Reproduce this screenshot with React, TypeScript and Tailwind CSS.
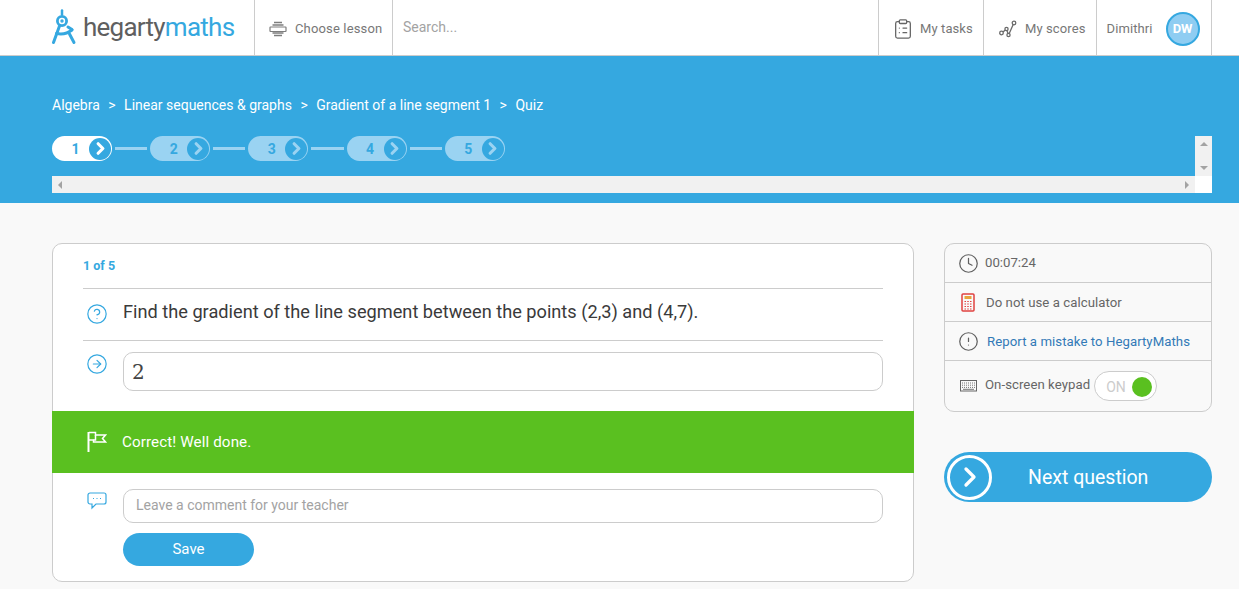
import { ChevronRight, CircleAlert, CircleArrowRight, CircleHelp, Clock, ClipboardList } from "lucide-react";

function CompassLogo() {
  return (
    <svg width="26" height="36" viewBox="0 0 26 36" fill="none" stroke="#35a8e0" strokeLinecap="round" strokeWidth="3">
      <path d="M10 1.5v4" strokeWidth="2.5" />
      <circle cx="10" cy="12" r="4.6" strokeWidth="2.8" />
      <circle cx="10" cy="12" r="1" strokeWidth="1.4" />
      <path d="M7.5 17 1.5 33.5" />
      <path d="M4.5 24.5c5 1 11 0 15.5-3.5" />
      <path d="M16 18l4 2.5M17.5 25l4.5 8.5" />
    </svg>
  );
}

function LessonIcon() {
  return (
    <svg width="18" height="18" viewBox="0 0 18 18" fill="none" stroke="#7d7d7d">
      <path d="M5 2.5h8M3.5 5h11M3.5 13h11M5 15.5h8" strokeWidth="1.6" />
      <rect x="1" y="7" width="16" height="4.5" rx="0.5" strokeWidth="1.2" />
    </svg>
  );
}

function ScoresIcon() {
  return (
    <svg width="18" height="18" viewBox="0 0 18 18" fill="none" stroke="#6a6a6a" strokeWidth="1.3">
      <circle cx="2.5" cy="13" r="1.8" />
      <circle cx="7.5" cy="9" r="1.6" />
      <circle cx="9.5" cy="15" r="1.6" />
      <circle cx="15" cy="3" r="1.8" />
      <path d="M4 12 6.3 10M8 10.6 9 13.5M10.2 13.5 14.2 4.6" />
    </svg>
  );
}

function FlagIcon() {
  return (
    <svg width="20" height="22" viewBox="0 0 20 22" fill="none" stroke="#fff" strokeWidth="1.5">
      <path d="M1.5 1v20" strokeWidth="2" />
      <path d="M2 1.5h6.5V4h10l-3 3.5 3 3.5H6.5V9H2" />
      <path d="M8.5 4v5H6.500" />
    </svg>
  );
}

function CommentIcon() {
  return (
    <svg width="20" height="18" viewBox="0 0 20 18" fill="none" stroke="#35a8e0" strokeWidth="1.2">
      <path d="M3 1h14a2 2 0 0 1 2 2v7a2 2 0 0 1-2 2H9l-4 4v-4H3a2 2 0 0 1-2-2V3a2 2 0 0 1 2-2Z" />
      <path d="M6 6.500h1M9.500 6.500h1M13 6.500h1" />
    </svg>
  );
}

function CalculatorIcon() {
  return (
    <svg width="14" height="19" viewBox="0 0 14 19" fill="none">
      <rect x="1" y="1" width="12" height="17" rx="1" stroke="#e0413f" strokeWidth="1.5" />
      <rect x="3.500" y="3" width="7" height="3" fill="#e8a33d" />
      <path d="M3.500 8.500h7M3.500 11h7M3.500 13.500h7M3.500 16h7" stroke="#e0413f" strokeWidth="1.2" strokeDasharray="1.500 1.250" />
    </svg>
  );
}

function KeyboardIcon() {
  return (
    <svg width="17" height="12" viewBox="0 0 17 12" fill="none">
      <rect x="0.500" y="0.500" width="16" height="10.500" stroke="#666" />
      <path d="M2 3h13M2 5.200h13M2 7.400h13" stroke="#777" strokeDasharray="1 1" />
      <path d="M3 9.300h11" stroke="#777" />
    </svg>
  );
}

function Step({ n, active }: { n: number; active?: boolean }) {
  return (
    <div className={`flex h-[25px] w-[60px] shrink-0 items-center rounded-full ${active ? "bg-white" : "bg-[#9ad3f2]"}`}>
      <span className="w-[37px] pl-[10px] text-center text-sm font-bold leading-none text-[#35a8e0]">{n}</span>
      <span className={`grid size-[22px] place-items-center rounded-full bg-[#35a8e0] ${active ? "text-white" : "text-[#9ad3f2]"}`}>
        <ChevronRight className="size-[19px]" strokeWidth={4} />
      </span>
    </div>
  );
}

function Connector() {
  return <div className="mx-[3px] h-[3px] w-[32.200px] shrink-0 bg-[#9ad3f2]" />;
}

export default function App() {
  return (
    <div className="h-[589px] overflow-hidden bg-[#f9f9f9] font-['Roboto',sans-serif]">
      <header className="h-[56px] border-b border-[#cccccc] bg-white pl-[52px] pr-[27px]">
        <div className="flex h-[55px] items-stretch text-[13px] text-[#777777]">
          <div className="flex w-[202px] shrink-0 items-center gap-[5px] pb-[2px]">
            <CompassLogo />
            <span className="text-[26px] leading-none tracking-[-0.75px] text-[#5f5f5f]">
              hegarty<span className="text-[#35a8e0]">maths</span>
            </span>
          </div>
          <div className="flex w-[138px] shrink-0 items-center gap-[8px] border-l border-[#cccccc] pl-[14px] pt-[2px]">
            <LessonIcon />
            <span className="tracking-[0.15px]">Choose lesson</span>
          </div>
          <div className="flex flex-1 items-center border-l border-[#cccccc] pb-[2px] pl-[10px] text-sm text-[#a3a3a3]">Search...</div>
          <div className="flex w-[105px] shrink-0 items-center gap-[6px] border-l border-[#cccccc] pl-[13px] pt-[2px]">
            <ClipboardList className="size-[22px] text-[#666666]" strokeWidth={1.4} />
            <span className="tracking-[0.1px]">My tasks</span>
          </div>
          <div className="flex w-[113px] shrink-0 items-center gap-[8px] border-l border-[#cccccc] pl-[15px] pt-[2px]">
            <ScoresIcon />
            <span className="tracking-[0.1px]">My scores</span>
          </div>
          <div className="flex w-[116px] shrink-0 items-center border-x border-[#cccccc] pl-[9.500px] pt-[2px]">
            <span className="tracking-[0.1px]">Dimithri</span>
            <span className="ml-[13px] grid size-[34px] place-items-center rounded-full border-2 border-[#35a8e0] bg-[#8fcdf2] text-[13px] font-bold text-white">DW</span>
          </div>
        </div>
      </header>

      <section className="h-[147px] bg-[#35a8e0] pl-[52px] pr-[27px] pt-[40px]">
        <div className="flex h-[18px] items-center gap-[8.500px] text-sm text-white">
          <span>Algebra</span>
          <span>&gt;</span>
          <span>Linear sequences &amp; graphs</span>
          <span>&gt;</span>
          <span>Gradient of a line segment 1</span>
          <span>&gt;</span>
          <span>Quiz</span>
        </div>
        <div className="mt-[22px] flex h-[57px]">
          <div className="flex min-w-0 flex-1 flex-col">
            <div className="mb-[15px] flex h-[25px] items-center">
              <Step n={1} active />
              <Connector />
              <Step n={2} />
              <Connector />
              <Step n={3} />
              <Connector />
              <Step n={4} />
              <Connector />
              <Step n={5} />
            </div>
            <div className="flex h-[17px] items-center justify-between bg-[#f1f1f1] px-[6px]">
              <span className="h-0 w-0 border-y-[4px] border-r-[4px] border-y-transparent border-r-[#a3a3a3]" />
              <span className="h-0 w-0 border-y-[4px] border-l-[4px] border-y-transparent border-l-[#a3a3a3]" />
            </div>
          </div>
          <div className="flex w-[17px] shrink-0 flex-col bg-white">
            <div className="flex h-[40px] flex-col items-center justify-between bg-[#f1f1f1] py-[6px]">
              <span className="h-0 w-0 border-x-[4px] border-b-[4px] border-x-transparent border-b-[#a3a3a3]" />
              <span className="h-0 w-0 border-x-[4px] border-t-[4px] border-x-transparent border-t-[#a3a3a3]" />
            </div>
          </div>
        </div>
      </section>

      <main className="flex items-start gap-[30px] pl-[52px] pr-[27px] pt-[40px]">
        <div className="h-[339px] w-[862px] shrink-0 rounded-[10px] border border-[#cccccc] bg-white">
          <div className="px-[30px]">
            <div className="flex h-[45px] items-center border-b border-[#cccccc] text-[12.500px] font-bold text-[#35a8e0]">1 of 5</div>
            <div className="flex h-[52px] items-center gap-[15px] border-b border-[#cccccc] pb-[4px] pl-[3px]">
              <CircleHelp className="mt-[2px] size-[22px] text-[#35a8e0]" strokeWidth={1.3} />
              <p className="text-[18.200px] leading-none text-[#3a3a3a]">Find the gradient of the line segment between the points (2,3) and (4,7).</p>
            </div>
            <div className="flex items-start gap-[15px] pl-[3px] pt-[11px]">
              <CircleArrowRight className="mt-[1px] size-[22px] text-[#35a8e0]" strokeWidth={1.3} />
              <div className="flex h-[39px] flex-1 items-center rounded-[10px] border border-[#cccccc] pl-[8px] font-['DejaVu_Serif',serif] text-[20px] font-light text-[#444444]">2</div>
            </div>
          </div>
          <div className="-mx-px mt-[20px] flex h-[62px] items-center gap-[15px] bg-[#5ac020] pl-[35px] text-[15.200px] tracking-[0.1px] text-white">
            <FlagIcon />
            <span>Correct! Well done.</span>
          </div>
          <div className="flex items-start gap-[16px] pl-[34px] pr-[30px] pt-[16px]">
            <div className="w-[20px] shrink-0 pt-[3px]">
              <CommentIcon />
            </div>
            <div className="flex-1">
              <div className="flex h-[34px] items-center rounded-[10px] border border-[#cccccc] pb-[2px] pl-[12px] text-sm text-[#a3a3a3]">Leave a comment for your teacher</div>
              <button className="mt-[10px] h-[33px] w-[131px] rounded-full bg-[#35a8e0] text-[15px] text-white">Save</button>
            </div>
          </div>
        </div>

        <aside className="w-[268px] shrink-0">
          <div className="rounded-[10px] border border-[#cccccc] text-[13.200px] text-[#666666]">
            <div className="flex h-[39px] items-center gap-[6px] border-b border-[#cccccc] pl-[13px]">
              <Clock className="size-[21px] text-[#5f5f5f]" strokeWidth={1.400} />
              <span>00:07:24</span>
            </div>
            <div className="flex h-[39px] items-center gap-[11px] border-b border-[#cccccc] pl-[16px]">
              <CalculatorIcon />
              <span className="pt-[2px] tracking-[0.05px]">Do not use a calculator</span>
            </div>
            <div className="flex h-[39px] items-center gap-[8px] border-b border-[#cccccc] pl-[13px]">
              <CircleAlert className="size-[21px] text-[#5f5f5f]" strokeWidth={1.400} />
              <span className="pt-[2px] tracking-[0.06px] text-[#337ab7]">Report a mistake to HegartyMaths</span>
            </div>
            <div className="flex h-[50px] items-center pl-[15px]">
              <KeyboardIcon />
              <span className="mb-[2px] ml-[8px] tracking-[0.05px]">On-screen keypad</span>
              <div className="ml-[4px] flex h-[30px] w-[63px] items-center justify-between rounded-full border border-[#cccccc] bg-white pl-[11px] pr-[1px] pt-[1px] text-sm text-[#cccccc]">
                <span>ON</span>
                <span className="mr-[3px] size-[20px] rounded-full bg-[#5ac020]" />
              </div>
            </div>
          </div>
          <button className="mt-[40px] flex h-[50px] w-full items-center rounded-full bg-[#35a8e0] pl-[3px] text-white">
            <span className="grid size-[45px] shrink-0 place-items-center rounded-full border-[3px] border-white">
              <ChevronRight className="size-[32px]" strokeWidth={2.500} />
            </span>
            <span className="ml-[36px] pt-[2px] text-[19.500px]">Next question</span>
          </button>
        </aside>
      </main>
    </div>
  );
}
